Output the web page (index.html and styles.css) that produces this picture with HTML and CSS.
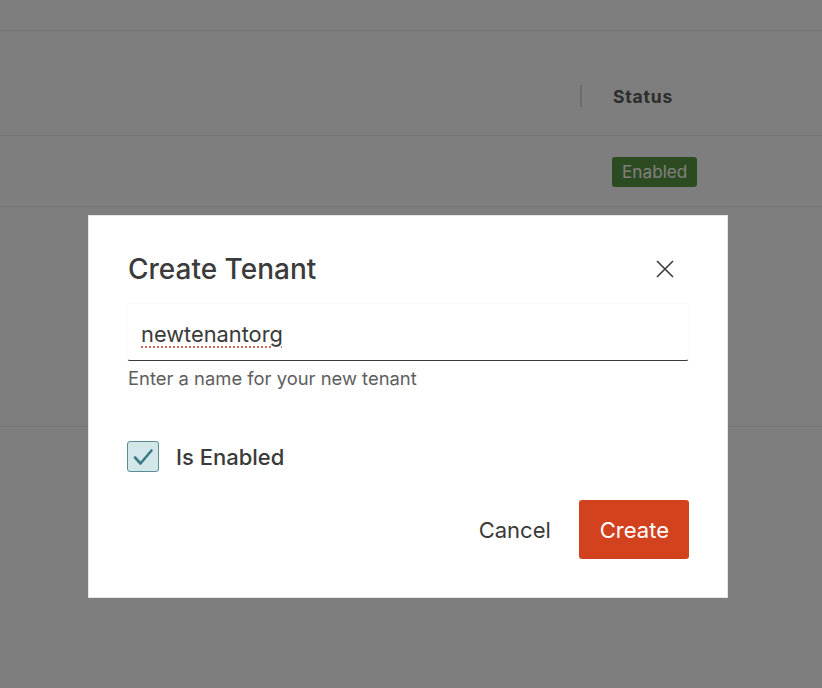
FILE: index.html
```html
<!DOCTYPE html>
<html lang="en">
<head>
<meta charset="utf-8">
<title>Create Tenant</title>
<link rel="stylesheet" href="styles.css">
</head>
<body>
<div class="page">
  <div class="topbar"></div>
  <div class="table">
    <div class="row head">
      <div class="cell main"></div>
      <div class="cell status"><span class="sep"></span><span class="th">Status</span></div>
    </div>
    <div class="row data">
      <div class="cell main"></div>
      <div class="cell status"><span class="badge">Enabled</span></div>
    </div>
    <div class="row filler"></div>
  </div>
</div>
<div class="overlay"></div>
<div class="dialog" role="dialog" aria-labelledby="dlg-title">
  <div class="dlg-head">
    <h1 id="dlg-title" class="dlg-title">Create Tenant</h1>
    <button class="close" aria-label="Close">
      <svg width="20" height="20" viewBox="0 0 20 20"><path d="M2 2 L18 18 M18 2 L2 18" stroke="#3a3a3a" stroke-width="1.6" fill="none"/></svg>
    </button>
  </div>
  <div class="field">
    <div class="input" role="textbox"><span class="typo">newtenantorg</span></div>
    <div class="help">Enter a name for your new tenant</div>
  </div>
  <label class="check">
    <span class="box">
      <svg width="32" height="31" viewBox="0 0 32 31"><path d="M8 16.5 L13.5 22.5 L24.5 9.5" stroke="#3c7b84" stroke-width="2.6" fill="none" stroke-linecap="round" stroke-linejoin="round"/></svg>
    </span>
    <span class="check-label">Is Enabled</span>
  </label>
  <div class="actions">
    <button class="btn ghost">Cancel</button>
    <button class="btn primary">Create</button>
  </div>
</div>
</body>
</html>
```

FILE: styles.css
```css
* { box-sizing: border-box; }
html, body { margin: 0; padding: 0; }
body {
  width: 822px;
  height: 688px;
  overflow: hidden;
  background: #fdfdfc;
  font-family: Inter, "Noto Sans", "Liberation Sans", sans-serif;
  color: #3a3a3a;
}
.page { width: 100%; }
.topbar {
  height: 31px;
  border-bottom: 1px solid #e0e0e0;
}
.row {
  display: flex;
  border-bottom: 1px solid #e8e8e8;
}
.row.head { height: 105px; align-items: center; padding-top: 26px; }
.row.data { height: 71px; align-items: center; padding-top: 2px; }
.row.filler { height: 220px; }
.cell.main { flex: 1; }
.cell.status {
  width: 242px;
  display: flex;
  align-items: center;
}
.sep {
  width: 2px;
  height: 22px;
  background: #d8d8d8;
  margin-right: 31px;
}
.th {
  font-size: 17.5px;
  font-weight: 700;
  letter-spacing: 0.8px;
  color: #5a5a5a;
}
.row.data .cell.status { padding-left: 32px; }
.badge {
  display: inline-block;
  height: 30px;
  line-height: 30px;
  padding: 0 10px;
  border-radius: 3px;
  background: #5a9642;
  color: #ffffff;
  font-size: 17.2px;
}
.overlay {
  position: fixed;
  inset: 0;
  background: rgba(0, 0, 0, 0.5);
}
.dialog {
  position: absolute;
  left: 88px;
  top: 215px;
  width: 640px;
  background: #ffffff;
  border: 1px solid #e6e6e6;
  padding: 29px 38px 38px 38px;
}
.dlg-head {
  display: flex;
  align-items: center;
  justify-content: space-between;
  height: 48px;
}
.dlg-title {
  margin: 0 0 0 1px;
  font-size: 28px;
  font-weight: 500;
  color: #3b3b3b;
  letter-spacing: 0;
}
.close {
  width: 48px;
  height: 48px;
  border: 0;
  background: none;
  padding: 0;
  display: flex;
  align-items: center;
  justify-content: center;
}
.field { margin-top: 10px; }
.input {
  height: 58px;
  border: 1px solid #fafafa;
  border-bottom: 1px solid #3a3a3a;
  border-radius: 3px;
  padding: 0 13px;
  display: flex;
  align-items: center;
  padding-top: 4px;
  font-size: 21.8px;
  color: #3a3a3a;
}
.typo {
  text-decoration: underline dotted #d56b5c;
  text-decoration-thickness: 2px;
  text-underline-offset: 4px;
}
.help {
  margin-top: 6px;
  margin-left: 1px;
  font-size: 18.4px;
  line-height: 22px;
  color: #5e5e5e;
}
.check {
  margin-top: 52px;
  display: flex;
  align-items: center;
  height: 31px;
}
.box {
  width: 32px;
  height: 31px;
  border: 1px solid #5d8b93;
  border-radius: 3px;
  background: #d3e7eb;
  display: flex;
  align-items: center;
  justify-content: center;
}
.box svg { display: block; margin: -1px; }
.check-label {
  margin-left: 17px;
  font-size: 22px;
  font-weight: 500;
  color: #3a3a3a;
}
.actions {
  margin-top: 28px;
  display: flex;
  justify-content: flex-end;
  gap: 8px;
}
.btn {
  height: 59px;
  padding: 0 20px;
  border: 0;
  border-radius: 3px;
  font-family: inherit;
  font-size: 22px;
  cursor: pointer;
}
.btn.ghost { background: none; color: #3a3a3a; }
.btn.primary { background: #d3421f; color: #ffffff; padding: 0 20px 0 21px; }
```
